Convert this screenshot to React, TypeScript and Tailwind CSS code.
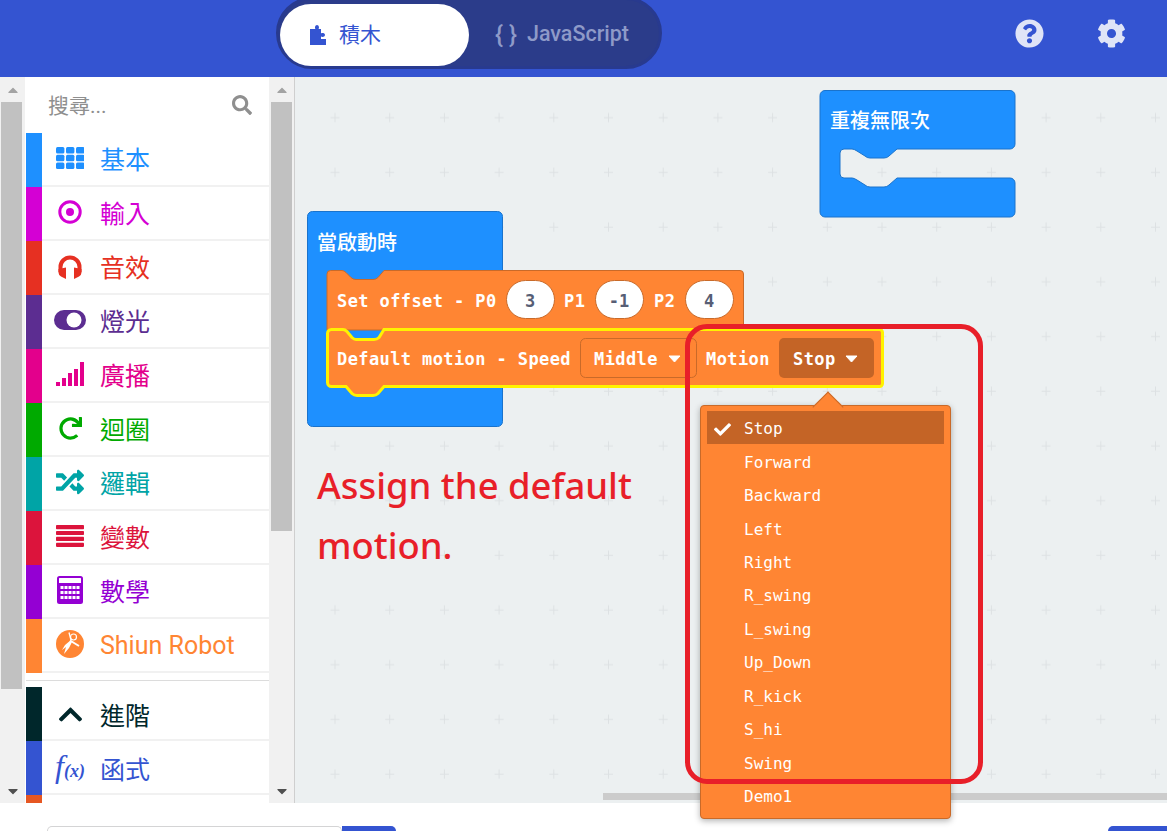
import React from "react";
import {
  FaRedo,
  FaRandom,
  FaChevronUp,
  FaSearch,
  FaQuestionCircle,
  FaCog,
  FaCheck,
  FaCaretUp,
  FaCaretDown,
} from "react-icons/fa";

const cjk = "font-['Roboto','Noto_Sans_CJK_TC',sans-serif]";

const GridIcon = () => (
  <svg width="28" height="22" viewBox="0 0 28 22" fill="#1e90ff">
    {[0, 10, 20].map((x) =>
      [0, 7.7, 15.4].map((y) => <rect key={`${x}-${y}`} x={x} y={y} width="8.400" height="6.600" rx="1.500" />)
    )}
  </svg>
);

const TargetIcon = () => (
  <svg width="24" height="24" viewBox="0 0 24 24">
    <circle cx="12" cy="12" r="10.200" fill="none" stroke="#d400d4" strokeWidth="3" />
    <circle cx="12" cy="12" r="4" fill="#d400d4" />
  </svg>
);

const HeadphonesIcon = () => (
  <svg width="26" height="25" viewBox="0 0 26 25" fill="#e63022">
    <path d="M3.500 18V13a9.500 9.500 0 0 1 19 0v5" fill="none" stroke="#e63022" strokeWidth="4" />
    <path d="M1.500 15 9 13.500V25l-5-2.500q-2.500-1.500-2.500-4zM24.500 15 17 13.500V25l5-2.500q2.500-1.500 2.500-4z" />
  </svg>
);

const ToggleIcon = () => (
  <svg width="32" height="20" viewBox="0 0 32 20">
    <rect width="32" height="20" rx="10" fill="#5c2d91" />
    <circle cx="20" cy="10" r="7.500" fill="#fff" />
  </svg>
);

const SignalIcon = () => (
  <svg width="28" height="24" viewBox="0 0 28 24" fill="#e3008c">
    <rect x="0" y="20" width="4" height="4" />
    <rect x="6" y="16" width="4" height="8" />
    <rect x="12" y="11" width="4" height="13" />
    <rect x="18" y="7" width="4" height="17" />
    <rect x="24" y="0" width="4" height="24" />
  </svg>
);

const BarsIcon = () => (
  <svg width="28" height="22" viewBox="0 0 28 22" fill="#dc143c">
    <rect y="0" width="28" height="4.200" rx="0.800" />
    <rect y="5.900" width="28" height="4.200" rx="0.800" />
    <rect y="11.800" width="28" height="4.200" rx="0.800" />
    <rect y="17.700" width="28" height="4.200" rx="0.800" />
  </svg>
);

const CalculatorIcon = () => (
  <svg width="26" height="28" viewBox="0 0 26 28">
    <rect x="1" y="1" width="24" height="26" rx="1.500" fill="none" stroke="#9400d3" strokeWidth="2" />
    <rect x="1" y="7" width="24" height="20" fill="#9400d3" />
    {[0, 1, 2].map((r) =>
      [0, 1, 2, 3, 4].map((c) => <rect key={`${r}-${c}`} x={3.500 + c * 4} y={10 + r * 5} width="3" height="3" fill="#fff" />)
    )}
  </svg>
);

const RobotIcon = () => (
  <svg width="28" height="28" viewBox="0 0 28 28">
    <circle cx="14" cy="14" r="14" fill="#ff8533" />
    <path d="M15 10 L9 15 L6 20 L10 17 L8 24 L13 18 L16 12 Z" fill="#fff" />
    <path d="M14 10.500 L23 16" stroke="#fff" strokeWidth="2" />
    <circle cx="17.500" cy="7" r="3" fill="none" stroke="#fff" strokeWidth="1.200" />
    <path d="M13 2.500 L15 10" stroke="#fff" strokeWidth="1.300" />
  </svg>
);

const FxIcon = () => (
  <span className="font-['Liberation_Serif',serif] italic text-[#3454d1] leading-none whitespace-nowrap">
    <span className="text-[32px]">f</span>
    <span className="text-[18px] font-bold">(x)</span>
  </span>
);

const PuzzleIcon = () => (
  <svg width="16" height="20" viewBox="0 0 16 20" fill="#3454d1">
    <path d="M0 4h5.500c-1-1-.5-4 1.500-4s2.500 3 1.500 4H11v4.500c1-1 4-.5 4 1.500s-3 2.500-4 1.500V14h5v6H0z" />
  </svg>
);

type Category = { label: string; color: string; icon: React.ReactNode; textPad: string };

const categories: Category[] = [
  { label: "基本", color: "#1e90ff", icon: <GridIcon />, textPad: "pt-[3px]" },
  { label: "輸入", color: "#d400d4", icon: <TargetIcon />, textPad: "pt-[3px]" },
  { label: "音效", color: "#e63022", icon: <HeadphonesIcon />, textPad: "pt-[3px]" },
  { label: "燈光", color: "#5c2d91", icon: <ToggleIcon />, textPad: "pt-[3px]" },
  { label: "廣播", color: "#e3008c", icon: <SignalIcon />, textPad: "pt-[3px]" },
  { label: "迴圈", color: "#00aa00", icon: <FaRedo size={23} color="#00aa00" />, textPad: "pt-[3px]" },
  { label: "邏輯", color: "#00a4a6", icon: <FaRandom size={28} color="#00a4a6" />, textPad: "pt-[3px]" },
  { label: "變數", color: "#dc143c", icon: <BarsIcon />, textPad: "pt-[3px]" },
  { label: "數學", color: "#9400d3", icon: <CalculatorIcon />, textPad: "pt-[3px]" },
  { label: "Shiun Robot", color: "#ff8533", icon: <RobotIcon />, textPad: "" },
];

const advanced: Category[] = [
  {
    label: "進階",
    color: "#00272b",
    icon: (
      <span className="pt-[4px]">
        <FaChevronUp size={27} color="#00272b" />
      </span>
    ),
    textPad: "pt-[7px]",
  },
  { label: "函式", color: "#3454d1", icon: <FxIcon />, textPad: "pt-[7px]" },
  { label: "", color: "#e65722", icon: null, textPad: "" },
];

const motions = ["Stop", "Forward", "Backward", "Left", "Right", "R_swing", "L_swing", "Up_Down", "R_kick", "S_hi", "Swing", "Demo1"];

const ToolboxRow = ({ item }: { item: Category }) => (
  <div className="flex h-[54px] shrink-0">
    <div className="w-4 shrink-0" style={{ backgroundColor: item.color }} />
    <div className="flex flex-1 items-center border-b-2 border-[#f1f1f1]">
      <div className="flex w-[58px] shrink-0 justify-center pr-[2px] pb-[2px]">{item.icon}</div>
      <span className={`${cjk} text-[25px] leading-none ${item.textPad}`} style={{ color: item.color }}>
        {item.label}
      </span>
    </div>
  </div>
);

const Scrollbar = ({ thumb }: { thumb: string }) => (
  <div className="flex w-[25px] shrink-0 flex-col bg-[#f1f1f1]">
    <div className="flex h-[25px] shrink-0 items-center justify-center">
      <FaCaretUp size={16} color="#a3a3a3" />
    </div>
    <div className={`${thumb} w-[21px] shrink-0 bg-[#c1c1c1]`} />
    <div className="flex-1" />
    <div className="flex h-[25px] shrink-0 items-center justify-center">
      <FaCaretDown size={16} color="#505050" />
    </div>
  </div>
);

const mono = { fontFamily: "'DejaVu Sans Mono', monospace", fontWeight: 700, fontSize: 17, letterSpacing: 0.4, fill: "#fff" };
const pillText = { ...mono, fill: "#575e75", letterSpacing: 0 };
const title = { fontFamily: "'Noto Sans CJK TC', sans-serif", fontWeight: 500, fontSize: 20, fill: "#fff" };

// blockly draws its blocks as one svg, same thing here
const Blocks = () => (
  <svg className="absolute inset-0" width="872" height="726">
    <defs>
      <pattern id="grid" x="12.650" y="13.600" width="54.700" height="54.700" patternUnits="userSpaceOnUse">
        <path d="M27.350 22.500v9M22.850 27h9" stroke="#dde1e3" strokeWidth="1" fill="none" />
      </pattern>
    </defs>
    <rect width="872" height="726" fill="url(#grid)" />

    {/* forever */}
    <path
      d="M530 13.500H715a5 5 0 0 1 5 5V67a5 5 0 0 1-5 5H602l-8 7q-2 2-5 2H575q-3 0-5-2l-8-5q-3-2-5-2H549a4 4 0 0 0-4 4V97a4 4 0 0 0 4 4H557q2 0 5 2l8 5q2 2 5 2H589q3 0 5-2l8-7H715a5 5 0 0 1 5 5V135a5 5 0 0 1-5 5H530a5 5 0 0 1-5-5V18.500a5 5 0 0 1 5-5z"
      fill="#1e90ff"
      stroke="#1a73cc"
    />
    <text x="535" y="51" style={title}>重複無限次</text>

    {/* on start */}
    <path
      d="M17.500 134.500h185a5 5 0 0 1 5 5v205a5 5 0 0 1-5 5h-185a5 5 0 0 1-5-5v-205a5 5 0 0 1 5-5z"
      fill="#1e90ff"
      stroke="#1a73cc"
    />
    <text x="22" y="173" style={title}>當啟動時</text>

    {/* set offset */}
    <path
      d="M35.500 193.500H47q2 0 4 2l5 5q2 2 5 2H78q3 0 5-2l6-7H445a3.500 3.500 0 0 1 3.500 3.500V253H32V197a3.500 3.500 0 0 1 3.500-3.500z"
      fill="#ff8533"
      stroke="#c96a29"
    />
    <text x="42" y="230" style={mono}>Set offset - P0</text>
    <rect x="211.500" y="203.500" width="48" height="38" rx="19" fill="#fff" stroke="#c96a29" />
    <text x="235" y="230" textAnchor="middle" style={pillText}>3</text>
    <text x="269" y="230" style={mono}>P1</text>
    <rect x="300.500" y="203.500" width="48" height="38" rx="19" fill="#fff" stroke="#c96a29" />
    <text x="324" y="230" textAnchor="middle" style={pillText}>-1</text>
    <text x="359" y="230" style={mono}>P2</text>
    <rect x="390.500" y="203.500" width="48" height="38" rx="19" fill="#fff" stroke="#c96a29" />
    <text x="414" y="230" textAnchor="middle" style={pillText}>4</text>

    {/* default motion */}
    <path
      d="M36.500 252.500H48q2 0 4 2l5 6q2 2 4 2H79q3 0 5-2l5-8H584.500a3 3 0 0 1 3 3V306.500a3 3 0 0 1-3 3H89l-6 7q-2 2-5 2H62q-3 0-5-2l-6-7H36.500a4 4 0 0 1-4-4V256.500a4 4 0 0 1 4-4z"
      fill="#ff8533"
      stroke="#fff200"
      strokeWidth="3"
    />
    <text x="42" y="288" style={mono}>Default motion - Speed</text>
    <rect x="285.500" y="261.500" width="116" height="39" rx="5" fill="#ff8533" stroke="#c96a29" />
    <text x="299" y="288" style={mono}>Middle</text>
    <path d="M374 279h11l-5.500 6z" fill="#fff" stroke="#fff" strokeLinejoin="round" />
    <text x="411" y="288" style={mono}>Motion</text>
    <rect x="484" y="261" width="95" height="40" rx="5" fill="#c46426" />
    <text x="498" y="288" style={mono}>Stop</text>
    <path d="M551 279h11l-5.500 6z" fill="#fff" stroke="#fff" strokeLinejoin="round" />
  </svg>
);

export default function App() {
  return (
    <div className="relative flex h-[831px] w-[1167px] flex-col overflow-hidden bg-white">
      <header className="flex h-[77px] shrink-0 items-start bg-[#3454d1] pl-[276px]">
        <div className="mt-[-3px] flex h-[72px] w-[386px] items-center rounded-full border-[3px] border-[#283a8f] bg-[#2b3c8a] px-px">
          <div className="mt-[3px] flex h-[62px] w-[189px] items-center rounded-full bg-white pl-[30px]">
            <PuzzleIcon />
            <span className={`${cjk} ml-[13px] pt-[2px] text-[21px] text-[#3454d1]`}>積木</span>
          </div>
          <div className="ml-[26px] mt-[3px] flex items-center font-['Roboto',sans-serif] text-[21.500px] font-medium text-[#8e9ac8]">
            <span className="mr-[10px] text-[24px]">{"{ }"}</span>
            JavaScript
          </div>
        </div>
        <div className="ml-[353px] mt-[19px] flex items-center gap-[53px]">
          <FaQuestionCircle size={29} color="#dfe4f7" />
          <FaCog size={29} color="#dfe4f7" />
        </div>
      </header>

      <div className="flex h-[726px] shrink-0">
        <Scrollbar thumb="ml-px h-[587px]" />
        <div className={`${cjk} flex w-[244px] shrink-0 flex-col overflow-hidden bg-white pl-px`}>
          <div className="flex h-[56px] shrink-0 items-center justify-between pl-[22px] pr-[17px]">
            <span className="pt-[4px] text-[21px] text-[#8f8f8f]">搜尋...</span>
            <FaSearch size={20} color="#8f8f8f" />
          </div>
          {categories.map((c) => (
            <ToolboxRow key={c.label} item={c} />
          ))}
          <div className="mt-[7px] mb-[6px] h-px shrink-0 bg-[#dcdcdc]" />
          {advanced.map((c) => (
            <ToolboxRow key={c.color} item={c} />
          ))}
        </div>
        <Scrollbar thumb="ml-[2px] h-[429px]" />
        <main className="relative flex-1 border-l border-[#cfcfcf] bg-[#ecf0f1]">
          <Blocks />
          <p className="absolute left-[22px] top-[378px] w-[340px] font-['Noto_Sans','Open_Sans',sans-serif] text-[36.400px] leading-[60px] font-medium text-[#e81f29]">
            Assign the default motion.
          </p>
          {/* scrollbar of the workspace */}
          <div className="absolute bottom-[3px] left-[308px] right-0 h-[7px] bg-[#cccccc]" />
        </main>
      </div>

      <div className="flex h-[28px] shrink-0 items-end">
        <div className="ml-[47px] h-[5px] w-[295px] rounded-t-[5px] border border-b-0 border-[#d4d4d5] bg-white" />
        <div className="h-[5px] w-[54px] rounded-tr-[5px] bg-[#3454d1]" />
        <div className="ml-[712px] h-[5px] flex-1 rounded-tl-[5px] bg-[#3454d1]" />
      </div>

      {/* dropdown opened over the workspace */}
      <div className="absolute left-[700px] top-[405px] w-[251px] rounded-[4px] border border-[#c96a29] bg-[#ff8533] px-[6px] pt-[5px] pb-[6px] shadow-[0_2px_6px_rgba(0,0,0,0.3)]">
        <div className="absolute left-[116px] top-[-10px] h-[22px] w-[22px] rotate-45 border-l border-t border-[#c96a29] bg-[#ff8533]" />
        {motions.map((m, i) => (
          <div
            key={m}
            className={`relative flex h-[33.450px] items-center pl-[37px] pt-[3px] font-['DejaVu_Sans_Mono',monospace] text-[16px] text-white ${i === 0 ? "bg-[#c46426]" : ""}`}
          >
            {i === 0 && (
              <span className="absolute left-[7px]">
                <FaCheck size={17} color="#fff" />
              </span>
            )}
            {m}
          </div>
        ))}
      </div>

      {/* annotation box */}
      <div className="pointer-events-none absolute left-[685px] top-[324px] h-[460px] w-[298px] rounded-[22px] border-[5px] border-[#e81f29]" />
    </div>
  );
}
